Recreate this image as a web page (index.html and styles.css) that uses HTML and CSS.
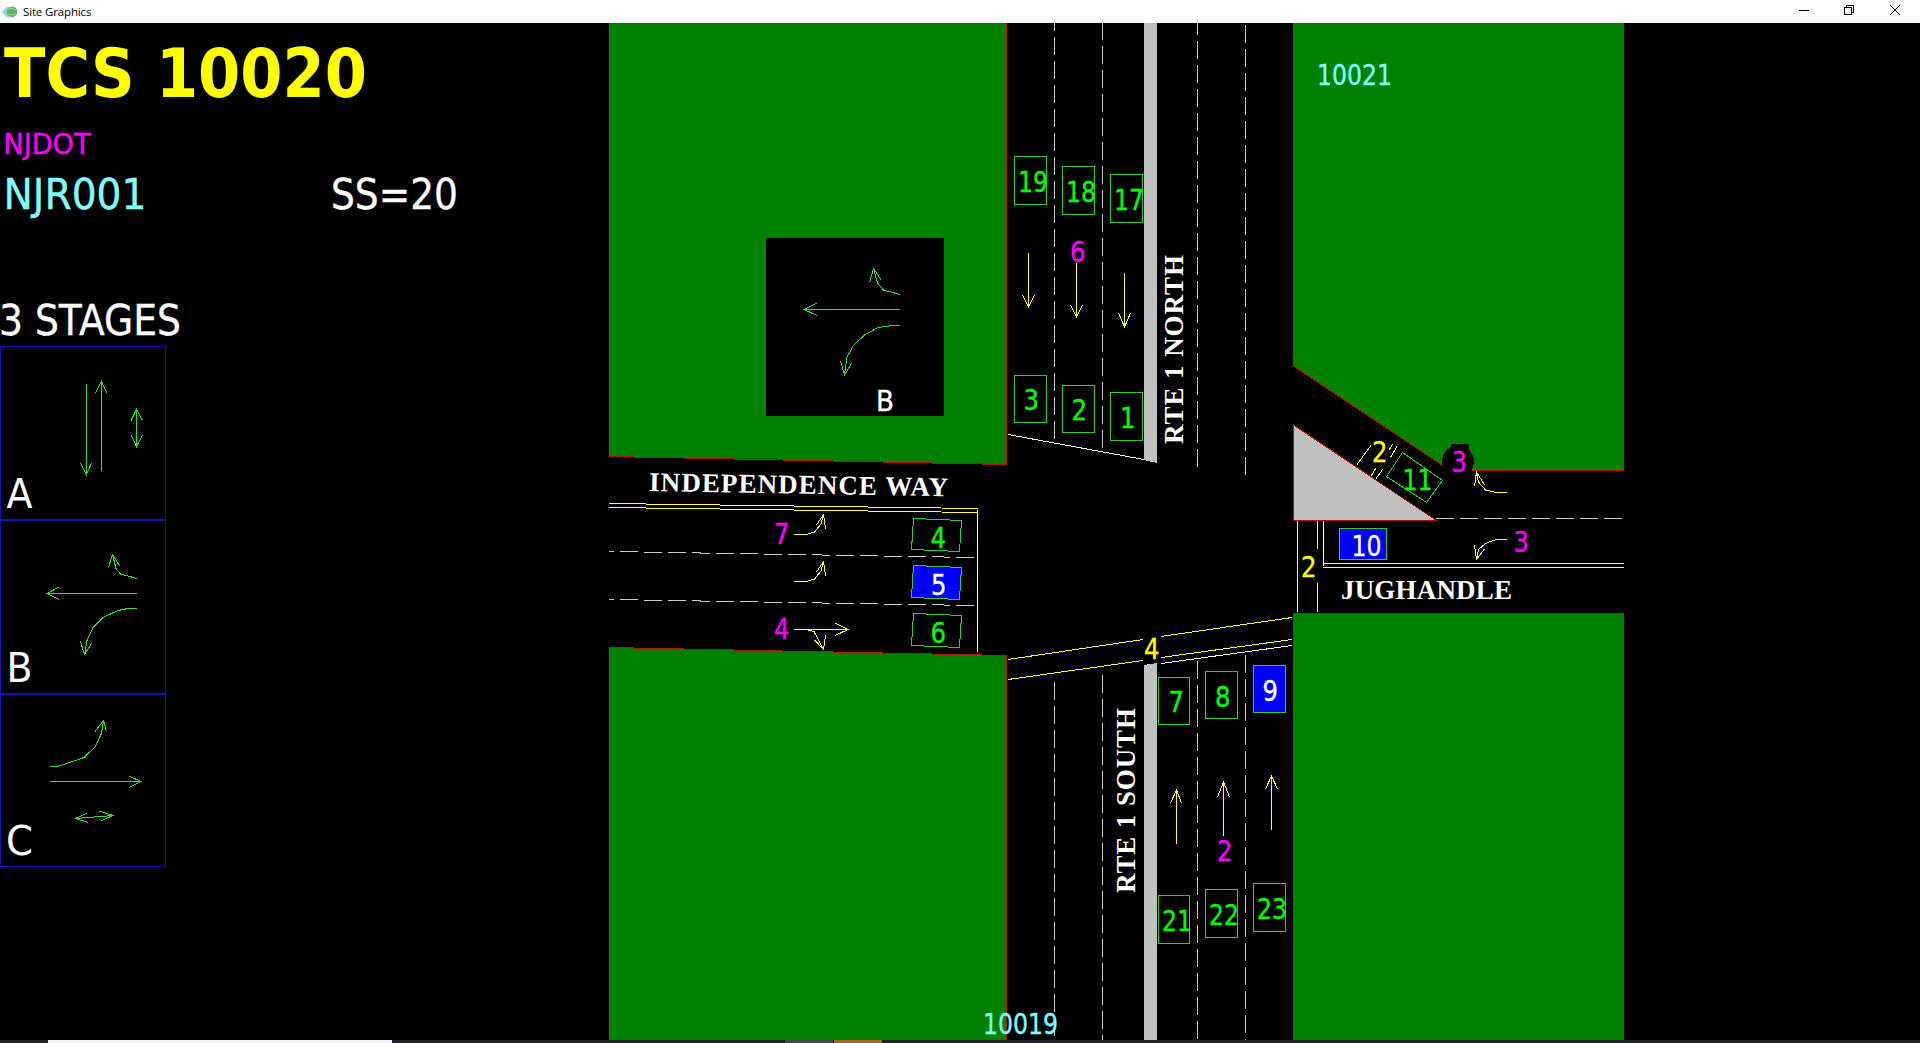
FILE: index.html
```html
<!DOCTYPE html>
<html lang="en">
<head>
<meta charset="utf-8">
<title>Site Graphics</title>
<link rel="stylesheet" href="styles.css">
</head>
<body>
<header class="titlebar">
  <svg class="app-icon" width="20" height="20" viewBox="0 0 20 20">
    <path d="M2 9.500 L6 5.500 L9 4.500 V16 L6 15 Z" fill="#a9cdf0"/>
    <circle cx="12" cy="9.800" r="5.300" fill="#5cb85c"/>
    <path d="M8 7 Q12 5 16 8 M7.500 12 Q12 14 16 12" stroke="#8fd08a" fill="none"/>
  </svg>
  <h1 class="titlebar-text">Site Graphics</h1>
  <svg class="window-controls" width="130" height="23" viewBox="1790 0 130 23">
    <path d="M1799 10.500 H1809 M1844.500 7.500 H1851.500 V14.500 H1844.500 Z M1846.500 7.500 V5.500 H1853.500 V12.500 H1851.500"/>
    <path class="smooth" d="M1890 5 L1900 15 M1900 5 L1890 15"/>
  </svg>
</header>

<main class="workspace">
  <aside class="sidebar">
    <svg class="headings" width="609" height="323" viewBox="0 23 609 323">
      <text class="sans title" x="4" y="97" textLength="363" lengthAdjust="spacingAndGlyphs">TCS 10020</text>
      <text class="sans magenta" x="3.500" y="154" textLength="87" lengthAdjust="spacingAndGlyphs">NJDOT</text>
      <text class="sans large cyan" x="3.500" y="209" textLength="143" lengthAdjust="spacingAndGlyphs">NJR001</text>
      <text class="sans large white" x="331" y="209" textLength="127" lengthAdjust="spacingAndGlyphs">SS=20</text>
      <text class="sans large white" x="-1" y="335" textLength="182" lengthAdjust="spacingAndGlyphs">3 STAGES</text>
    </svg>
    <section class="stage">
      <svg width="164" height="172" viewBox="1 347 164 172">
        <path class="move" d="M86.500 384 V474.500 M80.500 463 L86.500 474.500 L91.500 463 M101.500 471 V381.500 M95.500 393 L101.500 381.500 L107 393 M136.500 409.500 V446.500 M131 420.500 L136.500 409.500 L142.500 420.500 M131 435 L136.500 446.500 L142.500 435"/>
        <text class="sans letter" x="6.500" y="508" textLength="26" lengthAdjust="spacingAndGlyphs">A</text>
      </svg>
    </section>
    <section class="stage">
      <svg width="164" height="172" viewBox="1 521 164 172">
        <path class="move" d="M137 578.500 L120.500 574 L116 568.500 L112.500 554.500 M108.500 567.500 L112.500 554.500 L119.500 566 M137 593.500 H47 M59 587 L47 593.500 L59 599.500 M137 608 L128 608.500 L118 610.500 L103 617.500 L93 627.500 L87 640.500 L84.500 654.500 M80.500 641.500 L84.500 654.500 L91.500 643.500"/>
        <text class="sans letter" x="6.500" y="682" textLength="26" lengthAdjust="spacingAndGlyphs">B</text>
      </svg>
    </section>
    <section class="stage">
      <svg width="164" height="171" viewBox="1 695 164 171">
        <path class="move" d="M50 766.500 H57 L70 762.500 L84 757.500 L95 747 L101.500 733.500 L103.500 720.500 M95 731.500 L103.500 720.500 L106.500 731.500 M50 781.500 H141 M129 776 L141 781.500 L129 787.500 M75.500 818.500 L113 815.500 M87 813 L75.500 818.500 L88.500 822.500 M99 811 L113 815.500 L101.500 820.500"/>
        <text class="sans letter" x="6" y="855" textLength="27" lengthAdjust="spacingAndGlyphs">C</text>
      </svg>
    </section>
  </aside>

  <svg class="map" width="1311" height="1017" viewBox="609 23 1311 1017">
    <!-- land parcels -->
    <g class="land">
      <path d="M609 23 H1007 V464.500 L609 456.500 Z"/>
      <path d="M609 647.500 L1007 655.500 V1040 H609 Z"/>
      <path d="M1293 23 H1624 V470.500 H1450 L1293 366 Z"/>
      <path d="M1293 613 H1624 V1040 H1293 Z"/>
    </g>
    <g class="curb">
      <path d="M1006.500 23 V464.500 L609 456.500"/>
      <path d="M609 647.500 L1006.500 655.500 V1040"/>
      <path d="M1293.500 23 V366 L1450 470.500 H1624"/>
      <path d="M1624 613.500 H1293.500 V1040"/>
      <path class="island" d="M1293.500 425 L1436.500 520.500 H1293.500 Z"/>
    </g>
    <path class="median" d="M1144 23 H1157 V463 L1144 460 Z M1144 665 L1157 663 V1040 H1144 Z"/>

    <!-- lane lines -->
    <g class="lane">
      <path d="M1054.500 439 V23"/>
      <path d="M1102.500 448 V23"/>
      <path d="M1197.500 467 V23"/>
      <path d="M1245.500 475 V23"/>
      <path d="M1054.500 682 V1040"/>
      <path d="M1102.500 675 V1040"/>
      <path d="M1197.500 661 V1040"/>
      <path d="M1245.500 655 V1040"/>
      <path d="M1436 518.500 H1624"/>
      <path stroke-dashoffset="13" d="M609 551.500 L974 557.500"/>
      <path stroke-dashoffset="13" d="M609 599.500 L974 605.500"/>
    </g>
    <path class="stop" d="M1008 434.500 L1144 459.500 M977.500 510 V652 M1323.500 521 V566 M1161 663.500 L1292 645.500 M1390.500 457.500 L1397 446.500 M1376 478.500 L1383 469"/>
    <path class="paint" d="M609 503.500 L978 508.500 M609 507.500 L978 512.500 M1297.500 521 V612 M1317.500 521 V549 M1317.500 583 V612 M1323 563.500 H1624 M1323 567.500 H1624"/>
    <path class="paint" d="M1008 659.500 L1143 639.500 M1161 636.500 L1292 617.500 M1008 679.500 L1143 660.500 M1161 657.500 L1292 639.500 M1357 464.500 L1371 445.500 M1389 450 L1392.500 444.500 M1371 476 L1376 468"/>

    <!-- turn arrows -->
    <g class="paint">
      <path d="M1028.500 253 V307 M1022.500 295 L1028.500 307 L1034.500 295 M1076.500 263 V317 M1070.500 305 L1076.500 317 L1082.500 305 M1124.500 273 V327 M1118.500 313 L1124.500 327 L1130.500 313"/>
      <path d="M1176.500 844 V790 M1170.500 803 L1176.500 790 L1181.500 803 M1223.500 836 V782 M1217.500 797 L1223.500 782 L1229.500 797 M1271.500 830 V776 M1265.500 789 L1271.500 776 L1277.500 789"/>
      <path d="M794 534.500 H806 L814.500 532 L821 524 L823.500 514.500 M816.500 525 L823.500 514.500 L825.500 529"/>
      <path d="M794 581.500 H806 L814.500 579 L821 571 L823.500 561.500 M816.500 572 L823.500 561.500 L825.500 576"/>
      <path d="M794 629.500 H848 M835 623 L848 629.500 L835 635.500 M806 629.500 L814 631.500 L823.500 649.500 M814.500 640 L823.500 649.500 L825.500 635.500"/>
      <path d="M1507 492.500 H1496 L1485.500 490 L1478.500 482 L1476.500 472 M1474.500 486.500 L1476.500 472 L1484.500 485"/>
      <path d="M1507 539.500 H1496 L1485.500 543.500 L1478.500 549.500 L1476.500 559.500 M1474.500 545 L1476.500 559.500 L1484.500 549"/>
    </g>

    <!-- current stage inset -->
    <path class="inset" d="M766 238 H944 V416 H766 Z"/>
    <path class="move" d="M900 294.500 L883.500 290 L877.500 283 L873.500 268.500 M869.500 282.500 L873.500 268.500 L881.500 280.500 M900 309.500 H804 M817 303 L804 309.500 L817 315.500 M900 325.500 L889 326 L878 327.500 L864.500 335 L853.500 345.500 L847 357 L844.500 375 M840.500 361 L844.500 375 L851.500 363.500"/>
    <text class="sans white" x="876" y="411" textLength="18" lengthAdjust="spacingAndGlyphs">B</text>

    <!-- detectors -->
    <g class="detector">
      <path d="M1014.500 156.500 h32 v48 h-32 Z"/>
      <path d="M1062.500 166.500 h32 v48 h-32 Z"/>
      <path d="M1110.500 174.500 h32 v48 h-32 Z"/>
      <path d="M1014.500 375.500 h32 v47 h-32 Z"/>
      <path d="M1062.500 385.500 h32 v47 h-32 Z"/>
      <path d="M1110.500 392.500 h32 v48 h-32 Z"/>
      <path d="M1158.500 677.500 h31 v47 h-31 Z"/>
      <path d="M1205.500 671.500 h32 v47 h-32 Z"/>
      <path class="active" d="M1253.500 665.500 h32 v47 h-32 Z"/>
      <path d="M1158.500 895.500 h31 v48 h-31 Z"/>
      <path d="M1205.500 889.500 h32 v48 h-32 Z"/>
      <path d="M1253.500 883.500 h32 v48 h-32 Z"/>
      <path d="M913.500 518.500 L961.500 520.500 L959.500 551.500 L911.500 549.500 Z"/>
      <path class="active" d="M913.500 565.500 L961.500 567.500 L959.500 599.500 L911.500 597.500 Z"/>
      <path d="M913.500 613.500 L961.500 615.500 L959.500 647.500 L911.500 645.500 Z"/>
      <path class="active" d="M1339.500 528.500 h47 v31 h-47 Z"/>
      <path d="M1386.500 476.500 L1402.500 452.500 L1442.500 480.500 L1426.500 502.500 Z"/>
    </g>
    <g class="sans lime">
      <text x="1018" y="192" textLength="30" lengthAdjust="spacingAndGlyphs">19</text>
      <text x="1066" y="202" textLength="30" lengthAdjust="spacingAndGlyphs">18</text>
      <text x="1114" y="210" textLength="30" lengthAdjust="spacingAndGlyphs">17</text>
      <text x="1023.500" y="410" textLength="15.500" lengthAdjust="spacingAndGlyphs">3</text>
      <text x="1071.500" y="420" textLength="15.500" lengthAdjust="spacingAndGlyphs">2</text>
      <text x="1120" y="428" textLength="15.500" lengthAdjust="spacingAndGlyphs">1</text>
      <text x="1168.500" y="711.500" textLength="15.500" lengthAdjust="spacingAndGlyphs">7</text>
      <text x="1215" y="706.500" textLength="15.500" lengthAdjust="spacingAndGlyphs">8</text>
      <text x="1162" y="930.500" textLength="30" lengthAdjust="spacingAndGlyphs">21</text>
      <text x="1209" y="925" textLength="30" lengthAdjust="spacingAndGlyphs">22</text>
      <text x="1257" y="919" textLength="30" lengthAdjust="spacingAndGlyphs">23</text>
      <text x="930.500" y="547.500" textLength="15.500" lengthAdjust="spacingAndGlyphs">4</text>
      <text x="930.500" y="642.500" textLength="15.500" lengthAdjust="spacingAndGlyphs">6</text>
      <text x="1402.500" y="490" textLength="30" lengthAdjust="spacingAndGlyphs">11</text>
    </g>
    <g class="sans white">
      <text x="1262.500" y="700.500" textLength="15.500" lengthAdjust="spacingAndGlyphs">9</text>
      <text x="931" y="594.500" textLength="15.500" lengthAdjust="spacingAndGlyphs">5</text>
      <text x="1351.500" y="555.500" textLength="30" lengthAdjust="spacingAndGlyphs">10</text>
    </g>

    <!-- phase numbers -->
    <path class="inset" d="M1451 444 H1469 V470 H1451 Z"/>
    <circle class="inset" cx="1458" cy="461.500" r="16"/>
    <g class="sans magenta">
      <text x="1070" y="261.500" textLength="15.500" lengthAdjust="spacingAndGlyphs">6</text>
      <text x="774" y="543.500" textLength="15.500" lengthAdjust="spacingAndGlyphs">7</text>
      <text x="774" y="638.500" textLength="15.500" lengthAdjust="spacingAndGlyphs">4</text>
      <text x="1217" y="861" textLength="15.500" lengthAdjust="spacingAndGlyphs">2</text>
      <text x="1451.500" y="471.500" textLength="15.500" lengthAdjust="spacingAndGlyphs">3</text>
      <text x="1513.500" y="551.500" textLength="15.500" lengthAdjust="spacingAndGlyphs">3</text>
    </g>
    <g class="sans yellow">
      <text x="1144" y="659" textLength="15.500" lengthAdjust="spacingAndGlyphs">4</text>
      <text x="1372" y="461.500" textLength="15.500" lengthAdjust="spacingAndGlyphs">2</text>
      <text x="1301" y="576.500" textLength="15.500" lengthAdjust="spacingAndGlyphs">2</text>
    </g>

    <!-- neighbouring sites and street names -->
    <g class="sans cyan">
      <text x="983" y="1034" textLength="75" lengthAdjust="spacingAndGlyphs">10019</text>
      <text x="1317" y="85" textLength="75" lengthAdjust="spacingAndGlyphs">10021</text>
    </g>
    <g class="street">
      <text transform="translate(649 491) rotate(1)" textLength="299">INDEPENDENCE WAY</text>
      <text x="1341" y="599" textLength="171">JUGHANDLE</text>
      <text transform="translate(1183 444) rotate(-90)" textLength="189">RTE 1 NORTH</text>
      <text transform="translate(1135 893) rotate(-90)" textLength="185">RTE 1 SOUTH</text>
    </g>
  </svg>
</main>

<footer class="taskbar">
  <span class="task-search"></span>
  <span class="task-item"></span>
  <span class="task-item task-alert"></span>
</footer>
</body>
</html>
```
FILE: styles.css
```css
body {
  margin: 0;
  width: 1920px;
  height: 1043px;
  overflow: hidden;
  display: flex;
  flex-direction: column;
  background: #000;
}

svg {
  display: block;
}

.titlebar {
  display: flex;
  align-items: center;
  height: 23px;
  background: #fff;
}

.app-icon {
  flex: none;
  margin-right: 3px;
}

.titlebar-text {
  margin: 0;
  font: 400 11.5px/23px "Open Sans", "Noto Sans", sans-serif;
  letter-spacing: -0.15px;
  color: #000;
}

.window-controls {
  margin-left: auto;
  fill: none;
  stroke: #000;
  shape-rendering: crispEdges;
}

.window-controls .smooth {
  shape-rendering: auto;
}

.workspace {
  display: flex;
  height: 1017px;
}

.sidebar {
  width: 609px;
  display: flex;
  flex-direction: column;
  align-items: flex-start;
}

.stage {
  border: 1px solid #1010b4;
}

.sans {
  font-family: "DejaVu Sans", sans-serif;
  font-size: 27.5px;
  stroke-width: 0.35px;
}

.title {
  font-size: 67.5px;
  font-weight: 700;
  fill: #ff0;
}

.large {
  font-size: 43px;
}

.letter {
  font-size: 40.5px;
  fill: #fff;
}

.white { fill: #fff; stroke: #fff; }
.cyan { fill: #80ffff; stroke: #80ffff; }
.magenta { fill: #f0f; stroke: #f0f; }
.yellow { fill: #ff0; stroke: #ff0; }
.lime { fill: #0f0; stroke: #0f0; }

.land { fill: #008000; }

.land,
.curb,
.median,
.lane,
.stop,
.paint,
.move,
.detector,
.inset {
  shape-rendering: crispEdges;
}

.curb {
  fill: none;
  stroke: #b41408;
}

.curb .island { fill: #c0c0c0; }
.median { fill: #c0c0c0; }

.lane {
  fill: none;
  stroke: #c8c8c8;
  stroke-dasharray: 18 6;
}

.stop {
  fill: none;
  stroke: #fff;
}

.paint {
  fill: none;
  stroke: #ffff32;
}

.move {
  fill: none;
  stroke: #32dc32;
}

.inset { fill: #000; }

.detector {
  fill: none;
  stroke: #32cd32;
}

.active { fill: #00f; }

.street {
  font: 700 27px "Liberation Serif", serif;
  fill: #fff;
}

.taskbar {
  display: flex;
  height: 3px;
  background: #1c2226;
}

.task-search {
  width: 344px;
  margin: 0 393px 0 48px;
  background: #f2f2f2;
}

.task-item {
  width: 48px;
  margin-right: 1px;
  background: #434a4e;
}

.task-alert {
  background: #a5662a;
}
```
